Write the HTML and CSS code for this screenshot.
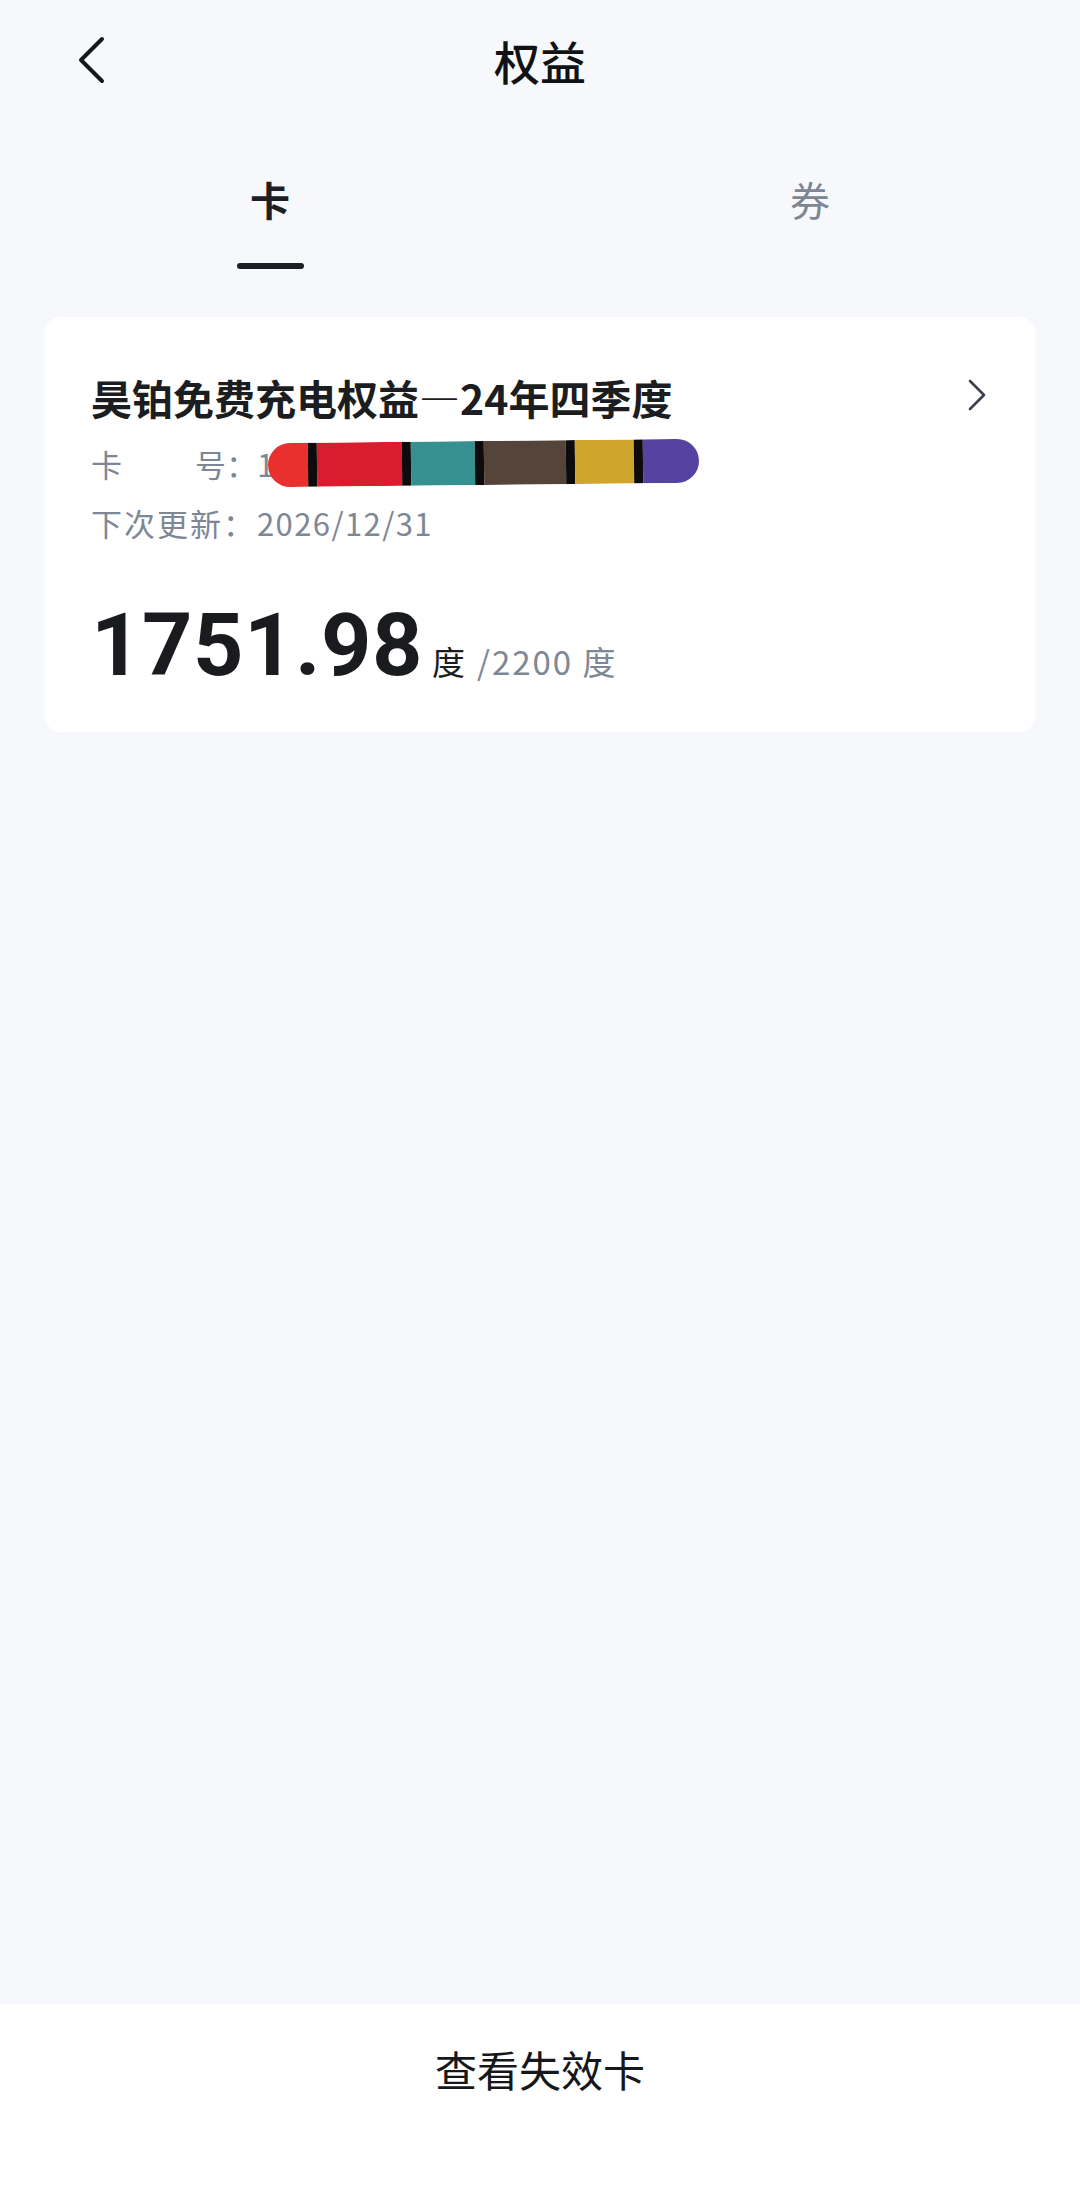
FILE: index.html
```html
<!DOCTYPE html>
<html lang="zh-CN">
<head>
    <meta charset="UTF-8">
    <meta name="viewport" content="width=device-width, initial-scale=1.0">
    <title>权益</title>
    <link rel="stylesheet" href="styles.css">
</head>
<body>
    <div class="page">
        <header class="topbar">
            <a class="back" href="#back">
                <svg width="30" height="48" viewBox="0 0 30 48"><path d="M26 3 L5 24 L26 45" fill="none" stroke="#16181c" stroke-width="4" stroke-linecap="round" stroke-linejoin="round"/></svg>
            </a>
            <h1>权益</h1>
            <span></span>
        </header>

        <nav class="tabs">
            <a class="tab active" href="#card">卡</a>
            <a class="tab" href="#coupon">券</a>
        </nav>

        <div class="card">
            <div class="card-head">
                <h2>昊铂免费充电权益—24年四季度</h2>
                <svg class="arrow" width="20" height="32" viewBox="0 0 20 32"><path d="M3 2 L17 16 L3 30" fill="none" stroke="#3a414d" stroke-width="2.6" stroke-linecap="round" stroke-linejoin="round"/></svg>
            </div>
            <div class="info-row">
                <span class="label split"><span>卡</span><span>号：</span></span>
                <span class="value">1</span>
                <span class="scribble">
                    <i style="width:40px;background:#e8302f"></i>
                    <i class="sep"></i>
                    <i style="width:85px;background:#d91c2e"></i>
                    <i class="sep"></i>
                    <i style="width:64px;background:#36908f"></i>
                    <i class="sep"></i>
                    <i style="width:82px;background:#554439"></i>
                    <i class="sep"></i>
                    <i style="width:59px;background:#cfa52b"></i>
                    <i class="sep"></i>
                    <i style="width:56px;background:#5642a0"></i>
                </span>
            </div>
            <div class="info-row">
                <span class="label spaced">下次更新：</span>
                <span class="value">2026/12/31</span>
            </div>
            <div class="amount">
                <span class="num">1751.98</span><span class="unit">度</span><span class="total">/2200 度</span>
            </div>
        </div>
    </div>

    <footer class="bottom">
        <a href="#expired">查看失效卡</a>
    </footer>
</body>
</html>
```

FILE: styles.css
```css
body {
    margin: 0;
    padding: 0;
    background-color: #f7f8fc;
    font-family: "Noto Sans CJK SC", "Noto Sans", sans-serif;
    color: #1b1d21;
}
a {
    text-decoration: none;
    color: inherit;
}
.page {
    min-height: 2004px;
}
.topbar {
    height: 120px;
    display: grid;
    grid-template-columns: 1fr auto 1fr;
    align-items: center;
}
.back {
    display: flex;
    padding-left: 76px;
}
.topbar h1 {
    margin: 0;
    font-size: 46px;
    font-weight: 500;
    color: #111214;
    line-height: 60px;
}
.tabs {
    display: grid;
    grid-template-columns: 1fr 1fr;
    padding-top: 51px;
}
.tab {
    justify-self: center;
    display: flex;
    flex-direction: column;
    align-items: center;
    font-size: 40px;
    line-height: 56px;
    color: #7d8693;
}
.tab::after {
    content: "";
    width: 67px;
    height: 6px;
    margin-top: 36px;
    border-radius: 3px;
    background: transparent;
}
.tab.active {
    color: #1d1f24;
    font-weight: 700;
}
.tab.active::after {
    background: #1d1f24;
}
.card {
    margin: 48px 45px 0;
    background: #ffffff;
    border-radius: 16px;
    padding: 52px 46px 20px;
}
.card-head {
    display: flex;
    justify-content: space-between;
    align-items: center;
}
.card-head h2 {
    margin: 0;
    font-size: 41px;
    font-weight: 600;
    line-height: 56px;
    color: #1b1d21;
}
.arrow {
    margin-right: 2px;
    margin-top: -4px;
}
.info-row {
    display: flex;
    align-items: center;
    height: 44px;
    margin-top: 16px;
    font-size: 31px;
    color: #7e8795;
}
.info-row + .info-row {
    margin-top: 15px;
}
.label {
    width: 166px;
    flex-shrink: 0;
}
.split {
    display: flex;
    justify-content: space-between;
}
.spaced {
    letter-spacing: 2px;
}
.value {
    color: #7e8795;
    letter-spacing: 1.4px;
}
.scribble {
    display: flex;
    height: 44px;
    margin-left: -8px;
    border-radius: 22px;
    overflow: hidden;
    transform: rotate(-0.6deg);
}
.scribble i {
    display: block;
    height: 100%;
}
.scribble .sep {
    width: 9px;
    background: #0d0b0c;
}
.amount {
    margin-top: 57px;
    line-height: 88px;
    white-space: nowrap;
}
.num {
    font-family: Roboto, "Noto Sans", sans-serif;
    font-size: 88px;
    font-weight: 700;
    color: #1a1b1f;
    letter-spacing: 0.5px;
}
.unit {
    font-size: 33px;
    line-height: 1;
    margin-left: 9px;
    color: #1b1d21;
}
.total {
    font-size: 33px;
    line-height: 1;
    margin-left: 12px;
    letter-spacing: 2px;
    color: #7e8795;
}
.bottom {
    height: 197px;
    background: #ffffff;
    display: flex;
    justify-content: center;
    padding-top: 40px;
    box-sizing: border-box;
}
.bottom a {
    font-size: 42px;
    line-height: 50px;
    color: #16171a;
}
```
